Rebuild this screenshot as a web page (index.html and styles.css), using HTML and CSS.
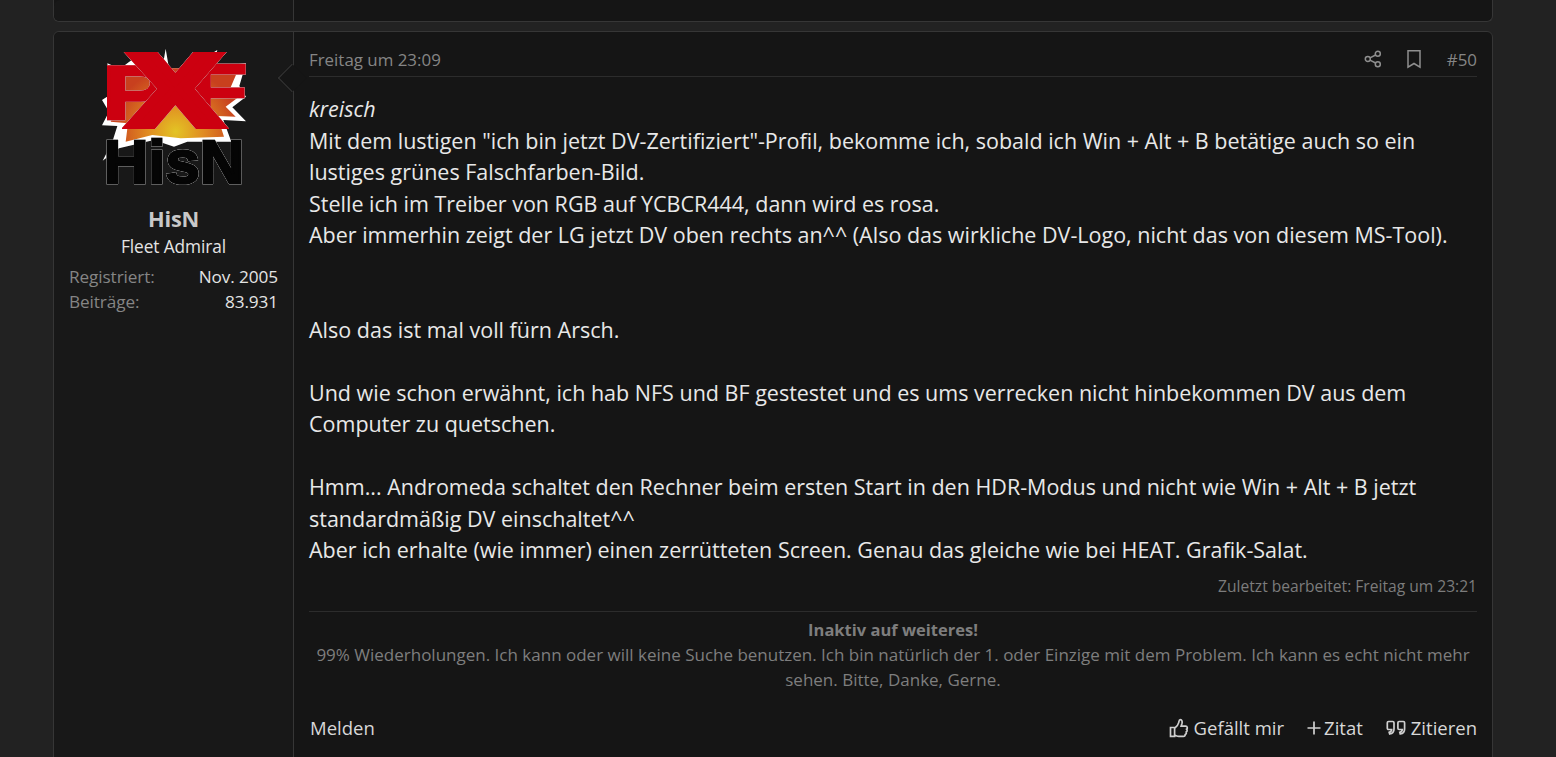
FILE: index.html
```html
<!DOCTYPE html>
<html lang="de">
<head>
<meta charset="utf-8">
<title>HisN</title>
<link rel="stylesheet" href="styles.css">
</head>
<body>
<div class="page">
  <article class="card stub">
    <div class="side"></div>
    <div class="main"></div>
  </article>
  <article class="card post">
    <aside class="side">
      <svg class="avatar" viewBox="144 138 432 432" width="144" height="144" aria-label="PXF HisN">
        <defs>
          <radialGradient id="fire" gradientUnits="userSpaceOnUse" cx="365" cy="395" r="190">
            <stop offset="0" stop-color="#e3c424"/>
            <stop offset=".45" stop-color="#e08a22"/>
            <stop offset="1" stop-color="#c8401e"/>
          </radialGradient>
        </defs>
        <polygon fill="#fff" points="160,190 198,206 238,176 262,205 325,205 335,146 345,205 400,205 490,150 476,200 576,190 556,258 576,290 535,322 576,364 508,360 532,425 400,425 360,440 300,420 195,445 146,482 175,425 190,378 144,376 165,335 144,300 172,282"/>
        <polygon fill="url(#fire)" points="205,225 240,205 470,205 550,215 530,262 555,290 515,320 545,350 490,348 510,410 380,415 295,405 215,425 222,370 170,365 185,330 170,300 195,280"/>
        <text class="red thin" x="144" y="356" font-size="226" textLength="204" lengthAdjust="spacingAndGlyphs">P</text>
        <text class="red thin" x="404" y="346" font-size="216" textLength="176" lengthAdjust="spacingAndGlyphs">F</text>
        <text class="red" x="228" y="376" font-size="299" textLength="272" lengthAdjust="spacingAndGlyphs">X</text>
        <text class="black" x="149" y="548" font-size="186" textLength="422" lengthAdjust="spacingAndGlyphs">HisN</text>
      </svg>
      <div class="name">HisN</div>
      <div class="rank">Fleet Admiral</div>
      <dl class="stat"><dt>Registriert:</dt><dd>Nov. 2005</dd></dl>
      <dl class="stat"><dt>Beiträge:</dt><dd>83.931</dd></dl>
    </aside>
    <div class="main">
      <span class="arrow"></span>
      <header class="head">
        <span class="date">Freitag um 23:09</span>
        <div class="tools">
          <svg class="ico" viewBox="0 0 20 20" width="20" height="20"><circle cx="14.800" cy="4.800" r="2.500"/><circle cx="14.800" cy="15.200" r="2.500"/><circle cx="4.800" cy="10" r="2.500"/><path d="M7 8.800l5.600-2.800M7 11.200l5.600 2.800"/></svg>
          <svg class="ico" viewBox="0 0 20 20" width="20" height="20"><path d="M4 1.800h12v16.400l-6-3.700-6 3.700z"/></svg>
          <span class="num">#50</span>
        </div>
      </header>
      <div class="body">
        <p><em>kreisch</em><br>
        Mit dem lustigen "ich bin jetzt DV-Zertifiziert"-Profil, bekomme ich, sobald ich Win + Alt + B betätige auch so ein<br>
        lustiges grünes Falschfarben-Bild.<br>
        Stelle ich im Treiber von RGB auf YCBCR444, dann wird es rosa.<br>
        Aber immerhin zeigt der LG jetzt DV oben rechts an^^ (Also das wirkliche DV-Logo, nicht das von diesem MS-Tool).<br>
        <br><br>
        Also das ist mal voll fürn Arsch.<br>
        <br>
        Und wie schon erwähnt, ich hab NFS und BF gestestet und es ums verrecken nicht hinbekommen DV aus dem<br>
        Computer zu quetschen.<br>
        <br>
        Hmm... Andromeda schaltet den Rechner beim ersten Start in den HDR-Modus und nicht wie Win + Alt + B jetzt<br>
        standardmäßig DV einschaltet^^<br>
        Aber ich erhalte (wie immer) einen zerrütteten Screen. Genau das gleiche wie bei HEAT. Grafik-Salat.</p>
      </div>
      <div class="edited">Zuletzt bearbeitet: Freitag um 23:21</div>
      <div class="sig">
        <strong>Inaktiv auf weiteres!</strong><br>
        99% Wiederholungen. Ich kann oder will keine Suche benutzen. Ich bin natürlich der 1. oder Einzige mit dem Problem. Ich kann es echt nicht mehr<br>
        sehen. Bitte, Danke, Gerne.
      </div>
      <footer class="foot">
        <a class="act report">Melden</a>
        <div class="acts">
          <a class="act"><svg class="ico big" viewBox="0 0 20 20" width="20" height="20"><path d="M1.500 9.500h4.100v8.800H1.500zM5.600 10.200c2-1.400 3.600-3.500 4.100-5.600.3-1.300.3-3 1.600-3 1.800 0 2.200 2.200 1.600 4.200l-.8 2.400h4.600c1.700 0 2.200 2.200.9 3 .9.900.6 2.300-.4 2.800.4 1.200-.1 2.200-1 2.500.1 1.100-.6 1.800-1.800 1.800H9.800c-1.700 0-2.800-.8-4.200-1.100"/></svg>Gefällt mir</a>
          <a class="act tight"><svg class="ico plus" viewBox="0 0 14 14" width="14" height="14"><path d="M7 .5v13M.5 7h13"/></svg>Zitat</a>
          <a class="act"><svg class="ico big" viewBox="0 0 20 20" width="20" height="20"><path d="M2.500 3.500h4.300c.7 0 1.200.5 1.200 1.200v6.300c0 2.700-1.700 4.600-4.300 5l-.5-1.600c1.500-.4 2.400-1.300 2.500-2.900H2.500c-.7 0-1.200-.5-1.200-1.200V4.700c0-.7.5-1.200 1.200-1.200zM13.100 3.500h4.300c.7 0 1.200.5 1.200 1.200v6.300c0 2.700-1.700 4.600-4.300 5l-.5-1.600c1.500-.4 2.400-1.300 2.500-2.900h-3.200c-.7 0-1.200-.5-1.200-1.200V4.700c0-.7.5-1.200 1.200-1.200z"/></svg>Zitieren</a>
        </div>
      </footer>
    </div>
  </article>
</div>
</body>
</html>
```
FILE: styles.css
```css
html, body {
  margin: 0;
  height: 100%;
  overflow: hidden;
  background: #222222;
}
body {
  font-family: "Open Sans", "Noto Sans", sans-serif;
  color: #e4e4e4;
}
.page {
  height: 757px;
  overflow: hidden;
  margin: 0 63px 0 53px;
  display: flex;
  flex-direction: column;
  gap: 9px;
}
.card {
  display: flex;
  flex: none;
  background: #151515;
  border: 1px solid #363636;
  border-radius: 6px;
}
.stub {
  height: 21px;
  border-top: 0;
  border-radius: 0 0 6px 6px;
}
.post {
  height: 800px;
}
.side {
  width: 239px;
  flex: none;
  background: #181818;
  border-right: 1px solid #363636;
  border-radius: 6px 0 0 6px;
  display: flex;
  flex-direction: column;
}
.avatar {
  display: block;
  margin: 14px 0 0 48px;
}
.avatar text {
  font-family: "Liberation Sans", sans-serif;
  font-weight: 700;
  stroke-linejoin: miter;
}
.avatar .red {
  fill: #cc0010;
  stroke: #cc0010;
  stroke-width: 24;
  filter: drop-shadow(0 0 2px #c8c8c8) drop-shadow(0 0 1px #c8c8c8);
}
.avatar .thin {
  stroke-width: 8;
}
.avatar .black {
  fill: #050505;
  stroke: #050505;
  stroke-width: 8;
  filter: drop-shadow(0 0 2px #c8c8c8) drop-shadow(0 0 1px #c8c8c8);
}
.name {
  margin-top: 15px;
  text-align: center;
  font-size: 21.800px;
  line-height: 28px;
  font-weight: 700;
  color: #c8c8c8;
  letter-spacing: -.2px;
}
.rank {
  text-align: center;
  font-size: 17.300px;
  line-height: 26px;
  letter-spacing: -.1px;
  padding-top: 1px;
}
.stat {
  margin: 0;
  padding: 0 15px;
  display: flex;
  justify-content: space-between;
  font-size: 17.200px;
  line-height: 25px;
  letter-spacing: -.1px;
}
.rank + .stat {
  margin-top: 4px;
}
.stat dt {
  color: #858585;
}
.stat dd {
  margin: 0;
}
.main {
  position: relative;
  flex: 1;
  min-width: 0;
  padding: 0 15px;
}
.arrow {
  position: absolute;
  left: -12px;
  top: 36px;
  width: 19px;
  height: 19px;
  background: #151515;
  border-left: 1px solid #363636;
  border-bottom: 1px solid #363636;
  transform: rotate(45deg);
}
.head {
  display: flex;
  justify-content: space-between;
  align-items: center;
  height: 34px;
  padding-top: 10px;
  border-bottom: 1px solid #2c2c2c;
  color: #858585;
  font-size: 16.900px;
  position: relative;
}
.tools {
  display: flex;
  align-items: center;
  gap: 21px;
}
.num {
  margin-left: 2px;
}
.ico {
  fill: none;
  stroke: #8f8f8f;
  stroke-width: 1.500;
}
.body {
  margin-top: 16px;
  font-size: 21.500px;
  line-height: 31.500px;
  white-space: nowrap;
  color: #e8e8e8;
}
.body p {
  margin: 0;
}
.edited {
  margin-top: 8px;
  height: 37px;
  text-align: right;
  font-size: 15.600px;
  line-height: 25px;
  color: #7c7c7c;
  border-bottom: 1px solid #2c2c2c;
}
.sig {
  margin-top: 5px;
  text-align: center;
  font-size: 17px;
  line-height: 25px;
  color: #7e7e7e;
  white-space: nowrap;
}
.sig strong {
  font-size: 16.500px;
}
.foot {
  display: flex;
  justify-content: space-between;
  align-items: center;
  margin-top: 22px;
  height: 28px;
  font-size: 18.500px;
  color: #d8d8d8;
}
.act {
  display: flex;
  align-items: center;
  gap: 5px;
}
.tight {
  gap: 3px;
}
.report {
  margin-left: 1px;
}
.acts {
  display: flex;
  gap: 23px;
}
.act .ico {
  stroke: #cfcfcf;
  stroke-width: 1.700;
}
```
